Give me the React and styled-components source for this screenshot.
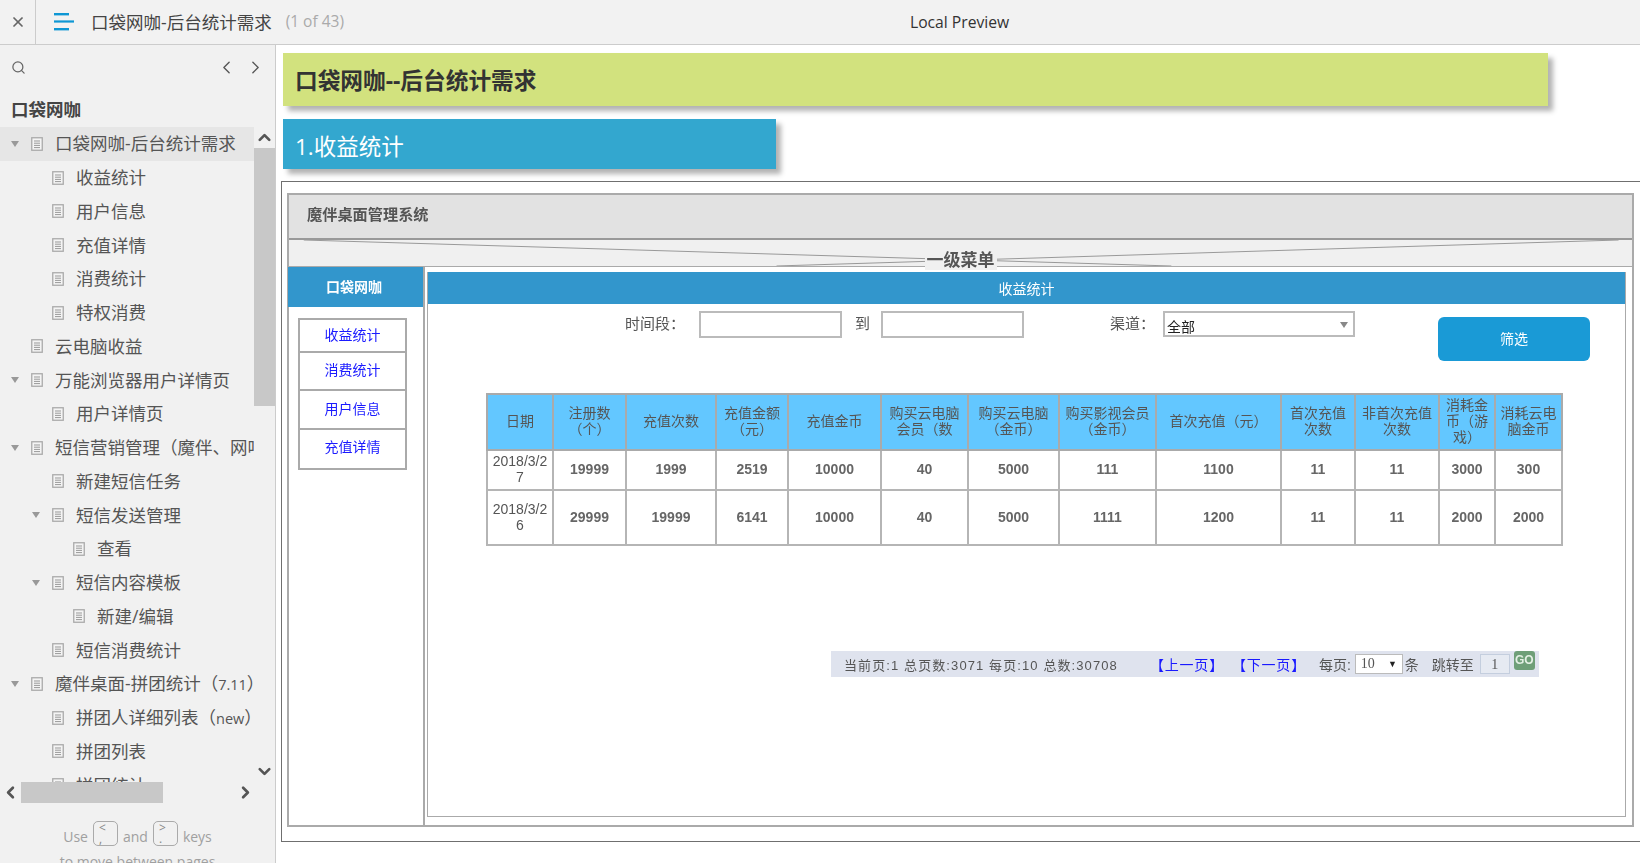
import styled, { createGlobalStyle } from 'styled-components';
import { X, Search, ChevronLeft, ChevronRight, ChevronUp, ChevronDown } from 'lucide-react';

const UI_FONT = '"Open Sans", "Noto Sans CJK SC", sans-serif';
const MOCK_FONT = '"Liberation Sans", "Noto Sans CJK SC", sans-serif';

const treeItems = [
  { label: '口袋网咖-后台统计需求', level: 0, open: true, active: true },
  { label: '收益统计', level: 1 },
  { label: '用户信息', level: 1 },
  { label: '充值详情', level: 1 },
  { label: '消费统计', level: 1 },
  { label: '特权消费', level: 1 },
  { label: '云电脑收益', level: 0 },
  { label: '万能浏览器用户详情页', level: 0, open: true },
  { label: '用户详情页', level: 1 },
  { label: '短信营销管理（魔伴、网吧）', level: 0, open: true },
  { label: '新建短信任务', level: 1 },
  { label: '短信发送管理', level: 1, open: true },
  { label: '查看', level: 2 },
  { label: '短信内容模板', level: 1, open: true },
  { label: '新建/编辑', level: 2 },
  { label: '短信消费统计', level: 1 },
  { label: '魔伴桌面-拼团统计（7.11）', level: 0, open: true },
  { label: '拼团人详细列表（new）', level: 1 },
  { label: '拼团列表', level: 1 },
  { label: '拼团统计', level: 1 },
];

const navItems = [
  { label: '收益统计', h: 33 },
  { label: '消费统计', h: 38 },
  { label: '用户信息', h: 39 },
  { label: '充值详情', h: 38 },
];

const columns = [
  { title: '日期', w: 66 },
  { title: '注册数\n（个）', w: 73 },
  { title: '充值次数', w: 90 },
  { title: '充值金额\n（元）', w: 72 },
  { title: '充值金币', w: 93 },
  { title: '购买云电脑\n会员（数', w: 87 },
  { title: '购买云电脑\n（金币）', w: 91 },
  { title: '购买影视会员\n（金币）', w: 97 },
  { title: '首次充值（元）', w: 125 },
  { title: '首次充值\n次数', w: 74 },
  { title: '非首次充值\n次数', w: 84 },
  { title: '消耗金\n币（游\n戏）', w: 56 },
  { title: '消耗云电\n脑金币', w: 67 },
];

const rows = [
  { h: 40, cells: ['2018/3/2\n7', '19999', '1999', '2519', '10000', '40', '5000', '111', '1100', '11', '11', '3000', '300'] },
  { h: 55, cells: ['2018/3/2\n6', '29999', '19999', '6141', '10000', '40', '5000', '1111', '1200', '11', '11', '2000', '2000'] },
];

function DocIcon() {
  return (
    <DocSvg width="12" height="14" viewBox="0 0 12 14" fill="none">
      <rect x="0.75" y="0.75" width="10.5" height="12.5" stroke="#aaa" strokeWidth="1.3" fill="#f4f4f4" />
      <path d="M3 4h6M3 6.2h6M3 8.4h6M3 10.6h6" stroke="#999" strokeWidth="1" />
    </DocSvg>
  );
}

function MenuIcon() {
  return (
    <svg width="20" height="18" viewBox="0 0 20 18">
      <rect x="0" y="0" width="15" height="2.4" fill="#0e97d4" />
      <rect x="0" y="7.4" width="20" height="2.2" fill="#0e97d4" />
      <rect x="0" y="15" width="15" height="2.4" fill="#0e97d4" />
    </svg>
  );
}

// latin runs in the tree are set smaller than the chinese around them
function splitLabel(label) {
  return label.split(/([a-z0-9.]+)/i).map((part, i) =>
    i % 2 ? <TreeLatin key={i}>{part}</TreeLatin> : part
  );
}

function App() {
  return (
    <Page>
      <GlobalStyle />
      <TopBar>
        <CloseButton>
          <X size={16} strokeWidth={2.6} color="#666" />
        </CloseButton>
        <MenuButton>
          <MenuIcon />
        </MenuButton>
        <PageTitle>口袋网咖-后台统计需求</PageTitle>
        <PageCount>(1 of 43)</PageCount>
        <PreviewLabel>Local Preview</PreviewLabel>
      </TopBar>

      <Main>
        <Sidebar>
          <SearchRow>
            <Search size={15} color="#666" />
            <PagerArrows>
              <ChevronLeft size={21} strokeWidth={1.6} color="#555" />
              <ChevronRight size={21} strokeWidth={1.6} color="#555" />
            </PagerArrows>
          </SearchRow>
          <ProjectName>口袋网咖</ProjectName>

          <TreeArea>
            <Tree>
              {treeItems.map((item) => (
                <TreeRow key={item.label} $level={item.level} $active={item.active}>
                  <Caret $show={item.open} />
                  <DocIcon />
                  <TreeLabel>{splitLabel(item.label)}</TreeLabel>
                </TreeRow>
              ))}
            </Tree>
            <VScroll>
              <ScrollButton>
                <ChevronUp size={19} strokeWidth={3.4} color="#555" />
              </ScrollButton>
              <VThumb />
              <VTrack />
              <ScrollButton>
                <ChevronDown size={19} strokeWidth={3.4} color="#555" />
              </ScrollButton>
            </VScroll>
          </TreeArea>

          <HScroll>
            <ScrollButton>
              <ChevronLeft size={19} strokeWidth={3.4} color="#555" />
            </ScrollButton>
            <HThumb />
            <ScrollButton>
              <ChevronRight size={19} strokeWidth={3.4} color="#555" />
            </ScrollButton>
          </HScroll>

          <KeysHint>
            <KeysLine>
              <KeysWord>Use</KeysWord>
              <KeyCap>
                <span>&lt;</span>
                <span>,</span>
              </KeyCap>
              <KeysWord>and</KeysWord>
              <KeyCap>
                <span>&gt;</span>
                <span>.</span>
              </KeyCap>
              <KeysWord>keys</KeysWord>
            </KeysLine>
            <KeysLine>to move between pages</KeysLine>
          </KeysHint>
        </Sidebar>

        <Content>
          <GreenBanner>口袋网咖--后台统计需求</GreenBanner>
          <BlueBanner>1.收益统计</BlueBanner>

          <Frame>
            <Mock>
              <MockHeader>魔伴桌面管理系统</MockHeader>
              <MenuBar>
                <CrossLines viewBox="0 0 100 100" preserveAspectRatio="none">
                  <line x1="1.1" y1="0" x2="65.7" y2="100" stroke="#999" strokeWidth="1" vectorEffect="non-scaling-stroke" />
                  <line x1="36.3" y1="100" x2="99" y2="0" stroke="#999" strokeWidth="1" vectorEffect="non-scaling-stroke" />
                </CrossLines>
                <MenuBarText>一级菜单</MenuBarText>
              </MenuBar>

              <MockBody>
                <LeftPanel>
                  <LeftPanelHead>口袋网咖</LeftPanelHead>
                  <NavBox>
                    {navItems.map((item) => (
                      <NavItem key={item.label} $h={item.h}>
                        {item.label}
                      </NavItem>
                    ))}
                  </NavBox>
                </LeftPanel>

                <RightPanel>
                  <PanelTitle>收益统计</PanelTitle>

                  <FilterRow>
                    <FilterLabel $left={197}>时间段：</FilterLabel>
                    <FilterInput $left={14} />
                    <FilterLabel $left={13}>到</FilterLabel>
                    <FilterInput $left={11} />
                    <FilterLabel $left={86}>渠道：</FilterLabel>
                    <FakeSelect>
                      全部
                      <SelectCaret />
                    </FakeSelect>
                    <FilterButton>筛选</FilterButton>
                  </FilterRow>

                  <DataTable>
                    <thead>
                      <tr>
                        {columns.map((col) => (
                          <HeadCell key={col.title} $w={col.w}>
                            {col.title}
                          </HeadCell>
                        ))}
                      </tr>
                    </thead>
                    <tbody>
                      {rows.map((row) => (
                        <BodyRow key={row.cells[0]} $h={row.h}>
                          {row.cells.map((cell, i) => (
                            <BodyCell key={i} $first={i === 0}>
                              {cell}
                            </BodyCell>
                          ))}
                        </BodyRow>
                      ))}
                    </tbody>
                  </DataTable>

                  <Pagination>
                    <PageInfo>当前页:1 总页数:3071 每页:10 总数:30708</PageInfo>
                    <PageLink $left={32}>【上一页】</PageLink>
                    <PageLink $left={8}>【下一页】</PageLink>
                    <PageText $left={13}>每页:</PageText>
                    <PerPage>
                      10
                      <span>▼</span>
                    </PerPage>
                    <PageText $left={2}>条</PageText>
                    <PageText $left={13}>跳转至</PageText>
                    <JumpBox>1</JumpBox>
                    <GoButton>GO</GoButton>
                  </Pagination>
                </RightPanel>
              </MockBody>
            </Mock>
          </Frame>
        </Content>
      </Main>
    </Page>
  );
}

const GlobalStyle = createGlobalStyle`
  html, body {
    margin: 0;
    height: 100%;
    overflow: hidden;
    background: #fff;
    font-family: ${UI_FONT};
  }

  #root {
    height: 100%;
  }
`;

const Page = styled.div`
  display: flex;
  flex-direction: column;
  height: 100vh;
  overflow: hidden;
`;

const TopBar = styled.header`
  display: flex;
  flex: none;
  align-items: center;
  box-sizing: border-box;
  height: 45px;
  background: #f2f2f2;
  border-bottom: 1px solid #ccc;
`;

const CloseButton = styled.div`
  display: flex;
  align-items: center;
  justify-content: center;
  box-sizing: border-box;
  width: 36px;
  height: 100%;
  border-right: 1px solid #ccc;
`;

const MenuButton = styled.div`
  display: flex;
  margin-left: 18px;
`;

const PageTitle = styled.div`
  margin: 0 0 2px 17px;
  font-size: 17.5px;
  color: #444;
  white-space: nowrap;
`;

const PageCount = styled.div`
  margin: 0 0 2px 14px;
  font-size: 15.5px;
  color: #aaa;
  white-space: nowrap;
`;

const PreviewLabel = styled.div`
  margin-left: 566px;
  font-size: 15.7px;
  color: #333;
  white-space: nowrap;
`;

const Main = styled.div`
  display: flex;
  flex: 1;
  min-height: 0;
`;

const Sidebar = styled.aside`
  display: flex;
  flex: none;
  flex-direction: column;
  box-sizing: border-box;
  width: 276px;
  height: 100%;
  overflow: hidden;
  background: #f1f1f1;
  border-right: 1px solid #ccc;
`;

const SearchRow = styled.div`
  display: flex;
  flex: none;
  align-items: center;
  justify-content: space-between;
  box-sizing: border-box;
  height: 52px;
  padding: 0 9px 8px 11px;
`;

const PagerArrows = styled.div`
  display: flex;
  gap: 8px;
`;

const ProjectName = styled.div`
  flex: none;
  height: 30px;
  padding-left: 11px;
  font-size: 17.5px;
  font-weight: 700;
  line-height: 25px;
  color: #444;
`;

const TreeArea = styled.div`
  display: flex;
  flex: none;
  height: 655px;
`;

const Tree = styled.div`
  flex: none;
  width: 254px;
  overflow: hidden;
`;

const TreeRow = styled.div`
  display: flex;
  align-items: center;
  box-sizing: border-box;
  width: max-content;
  min-width: 100%;
  height: 33.75px;
  padding-left: ${(p) => 11 + p.$level * 21}px;
  background: ${(p) => (p.$active ? '#e6e6e6' : 'transparent')};
`;

const Caret = styled.span`
  flex: none;
  width: 0;
  height: 0;
  margin-right: 12px;
  border-top: 6px solid ${(p) => (p.$show ? '#999' : 'transparent')};
  border-left: 4.5px solid transparent;
  border-right: 4.5px solid transparent;
`;

const DocSvg = styled.svg`
  flex: none;
`;

const TreeLabel = styled.span`
  margin: 0 0 2px 12px;
  font-size: 17.5px;
  color: #555;
  white-space: nowrap;
`;

const TreeLatin = styled.span`
  font-size: 14.5px;
`;

const VScroll = styled.div`
  display: flex;
  flex: none;
  flex-direction: column;
  width: 21px;
`;

const ScrollButton = styled.div`
  display: flex;
  flex: none;
  align-items: center;
  justify-content: center;
  width: 21px;
  height: 21px;
`;

const VThumb = styled.div`
  flex: none;
  height: 258px;
  background: #c8c8c8;
`;

const VTrack = styled.div`
  flex: 1;
`;

const HScroll = styled.div`
  display: flex;
  flex: none;
  height: 21px;
`;

const HThumb = styled.div`
  flex: none;
  width: 142px;
  margin-right: 72px;
  background: #c8c8c8;
`;

const KeysHint = styled.div`
  display: flex;
  flex-direction: column;
  align-items: center;
  gap: 6px;
  padding-top: 18px;
  font-size: 14px;
  color: #a0a0a0;
`;

const KeysLine = styled.div`
  display: flex;
  align-items: center;
  gap: 5px;
  white-space: nowrap;
`;

const KeysWord = styled.span`
  padding-top: 5px;
`;

const KeyCap = styled.span`
  display: flex;
  flex-direction: column;
  box-sizing: border-box;
  width: 25px;
  height: 25px;
  padding-left: 5px;
  font-size: 12px;
  line-height: 11px;
  color: #888;
  border: 1px solid #aaa;
  border-radius: 5px;
`;

const Content = styled.main`
  flex: 1;
  min-width: 0;
  padding-top: 8px;
  overflow: hidden;
`;

const GreenBanner = styled.h1`
  box-sizing: border-box;
  width: 1265px;
  height: 53px;
  margin: 0 0 13px 7px;
  padding-left: 12px;
  font-size: 22.7px;
  font-weight: 700;
  line-height: 55px;
  color: #333;
  background: #d2e27e;
  box-shadow: 5px 5px 5px rgba(0, 0, 0, 0.3);
`;

const BlueBanner = styled.h2`
  box-sizing: border-box;
  width: 493px;
  height: 50px;
  margin: 0 0 12px 7px;
  padding-left: 12px;
  font-size: 22.5px;
  font-weight: 400;
  line-height: 56px;
  color: #fff;
  background: #33a7cf;
  box-shadow: 5px 5px 5px rgba(0, 0, 0, 0.3);
`;

const Frame = styled.div`
  box-sizing: border-box;
  width: 1364px;
  height: 661px;
  margin-left: 5px;
  padding: 11px 5px;
  background: #fff;
  border: 1px solid #6f6f6f;
`;

const Mock = styled.div`
  box-sizing: border-box;
  width: 1347px;
  height: 634px;
  font-family: ${MOCK_FONT};
  background: #fff;
  border: 2px solid #aaa;
  filter: blur(0.45px);
`;

const MockHeader = styled.div`
  box-sizing: border-box;
  height: 45px;
  padding-left: 18px;
  font-size: 15.2px;
  font-weight: 700;
  line-height: 39px;
  color: #555;
  background: #e2e2e2;
  border-bottom: 2px solid #999;
`;

const MenuBar = styled.div`
  position: relative;
  box-sizing: border-box;
  height: 27px;
  text-align: center;
  background: #f0f0f0;
  border-bottom: 1px solid #aaa;
`;

const CrossLines = styled.svg`
  position: absolute;
  top: 0;
  left: 0;
  width: 100%;
  height: 100%;
`;

const MenuBarText = styled.span`
  position: relative;
  top: 9px;
  padding: 0 2px;
  font-size: 17px;
  font-weight: 700;
  line-height: 24px;
  color: #555;
  background: #f0f0f0;
`;

const MockBody = styled.div`
  display: flex;
  height: 558px;
  margin-left: -1px;
`;

const LeftPanel = styled.div`
  flex: none;
  box-sizing: border-box;
  width: 137px;
  height: 100%;
  border-right: 2px solid #aaa;
`;

const LeftPanelHead = styled.div`
  box-sizing: border-box;
  height: 40px;
  padding-right: 3px;
  font-size: 14px;
  font-weight: 700;
  line-height: 41px;
  text-align: center;
  color: #fff;
  background: #3296cc;
`;

const NavBox = styled.div`
  box-sizing: border-box;
  width: 109px;
  margin: 11px 0 0 10px;
  border: 2px solid #aaa;
`;

const NavItem = styled.div`
  box-sizing: border-box;
  height: ${(p) => p.$h}px;
  font-size: 14px;
  line-height: ${(p) => p.$h - 3}px;
  text-align: center;
  color: #1a1aff;
  border-bottom: 2px solid #aaa;

  &:last-child {
    border-bottom: none;
  }
`;

const RightPanel = styled.div`
  flex: none;
  box-sizing: border-box;
  width: 1199px;
  height: 545px;
  margin: 5px 0 0 2px;
  border: 1px solid #aaa;
  border-top: none;
`;

const PanelTitle = styled.div`
  height: 32px;
  font-size: 14px;
  line-height: 35px;
  text-align: center;
  color: #fff;
  background: #3296cc;
`;

const FilterRow = styled.div`
  display: flex;
  align-items: flex-start;
  height: 49px;
  margin-top: 7px;
  font-size: 15px;
  color: #555;
`;

const FilterLabel = styled.span`
  margin-left: ${(p) => p.$left}px;
  line-height: 25px;
  white-space: nowrap;
`;

const FilterInput = styled.div`
  flex: none;
  box-sizing: border-box;
  width: 143px;
  height: 27px;
  margin-left: ${(p) => p.$left}px;
  border: 2px solid #bbb;
`;

const FakeSelect = styled.div`
  position: relative;
  flex: none;
  box-sizing: border-box;
  width: 192px;
  height: 26px;
  margin-left: 8px;
  padding-left: 2px;
  font-size: 14px;
  line-height: 28px;
  color: #222;
  border: 2px solid #bbb;
`;

const SelectCaret = styled.span`
  position: absolute;
  top: 9px;
  right: 5px;
  width: 0;
  height: 0;
  border-top: 6px solid #888;
  border-left: 4.5px solid transparent;
  border-right: 4.5px solid transparent;
`;

const FilterButton = styled.div`
  flex: none;
  width: 152px;
  height: 44px;
  margin: 6px 0 0 83px;
  font-size: 14px;
  line-height: 44px;
  text-align: center;
  color: #fff;
  background: #1a9ad6;
  border-radius: 6px;
`;

const DataTable = styled.table`
  width: 1076px;
  margin: 33px 0 0 58px;
  table-layout: fixed;
  border-collapse: collapse;
  border: 2px solid #aaa;
`;

const HeadCell = styled.th`
  box-sizing: border-box;
  width: ${(p) => p.$w}px;
  height: 56px;
  padding: 0 0 2px;
  font-size: 14px;
  font-weight: 400;
  line-height: 16px;
  text-align: center;
  white-space: pre-line;
  color: #555;
  background: #63c7ff;
  border: 2px solid #aaa;
`;

const BodyRow = styled.tr`
  height: ${(p) => p.$h}px;
`;

const BodyCell = styled.td`
  padding: 0 0 2px;
  font-size: 14px;
  font-weight: ${(p) => (p.$first ? 400 : 700)};
  line-height: 16px;
  text-align: center;
  white-space: pre-line;
  color: ${(p) => (p.$first ? '#555' : '#666')};
  border: 2px solid #b5b5b5;
`;

const Pagination = styled.div`
  display: flex;
  align-items: center;
  box-sizing: border-box;
  width: 708px;
  height: 26px;
  margin: 105px 0 0 403px;
  padding-left: 13px;
  font-size: 14px;
  color: #555;
  white-space: nowrap;
  background: #dfe3ee;
`;

const PageInfo = styled.span`
  font-size: 13px;
  letter-spacing: 1.1px;
`;

const PageLink = styled.span`
  margin-left: ${(p) => p.$left}px;
  letter-spacing: 0.8px;
  color: #1a1aff;
`;

const PageText = styled.span`
  margin-left: ${(p) => p.$left}px;
`;

const PerPage = styled.div`
  display: flex;
  align-items: center;
  justify-content: space-between;
  box-sizing: border-box;
  width: 48px;
  height: 20px;
  margin-left: 4px;
  padding: 0 5px;
  font-family: "Liberation Serif", serif;
  background: #fff;
  border: 1px solid #bbb;

  span {
    font-size: 9px;
    color: #222;
  }
`;

const JumpBox = styled.div`
  box-sizing: border-box;
  width: 30px;
  height: 20px;
  margin-left: 6px;
  font-family: "Liberation Serif", serif;
  line-height: 20px;
  text-align: center;
  background: #e6eaf2;
  border: 1px solid #c4cede;
`;

const GoButton = styled.div`
  align-self: flex-start;
  width: 21px;
  height: 19px;
  margin-left: 4px;
  font-size: 12px;
  font-weight: 700;
  line-height: 19px;
  text-align: center;
  color: #e4f0e4;
  background: #6f9f78;
  border-radius: 3px;
`;

export default App;
